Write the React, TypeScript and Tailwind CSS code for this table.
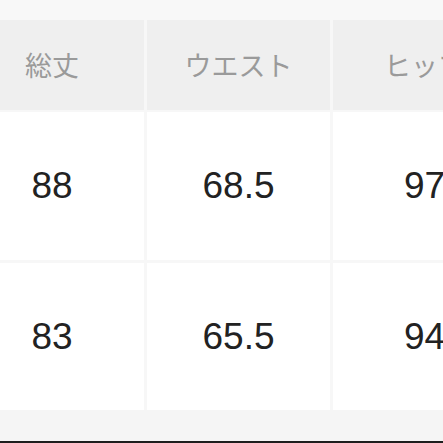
import React from "react";

const headers = ["総丈", "ウエスト", "ヒップ"];
const rows = [
  ["88", "68.5", "97"],
  ["83", "65.5", "94"],
];

export default function App() {
  return (
    <div className="w-[443px] h-[443px] overflow-hidden bg-[#f7f7f7] flex flex-col">
      <div className="h-[20px] shrink-0 bg-[#f8f8f8]" />
      <div className="ml-[-40px] grid grid-cols-[184px_183px_183px] gap-x-[3px] shrink-0 w-[556px]">
        {headers.map((h) => (
          <div
            key={h}
            className="h-[90px] bg-[#efefef] flex items-center justify-center text-[27px] text-[#9a9a9a]"
            style={{ fontFamily: '"Noto Sans CJK JP", "Noto Sans", sans-serif' }}
          >
            {h}
          </div>
        ))}
      </div>
      <div className="h-[2px] shrink-0" />
      {rows.map((r, i) => (
        <React.Fragment key={i}>
          <div className="ml-[-40px] grid grid-cols-[184px_183px_183px] gap-x-[3px] shrink-0 w-[556px]">
            {r.map((v, j) => (
              <div
                key={j}
                className={`${i === 0 ? "h-[148px]" : "h-[147px]"} bg-white flex items-center justify-center text-[37px] text-[#222]`}
                style={{ fontFamily: '"Liberation Sans", Arial, sans-serif' }}
              >
                {v}
              </div>
            ))}
          </div>
          {i === 0 && <div className="h-[3px] shrink-0" />}
        </React.Fragment>
      ))}
      <div className="flex-1 bg-[#f5f5f5]" />
      <div className="h-[2px] shrink-0 bg-[#1e1e1e]" />
    </div>
  );
}
